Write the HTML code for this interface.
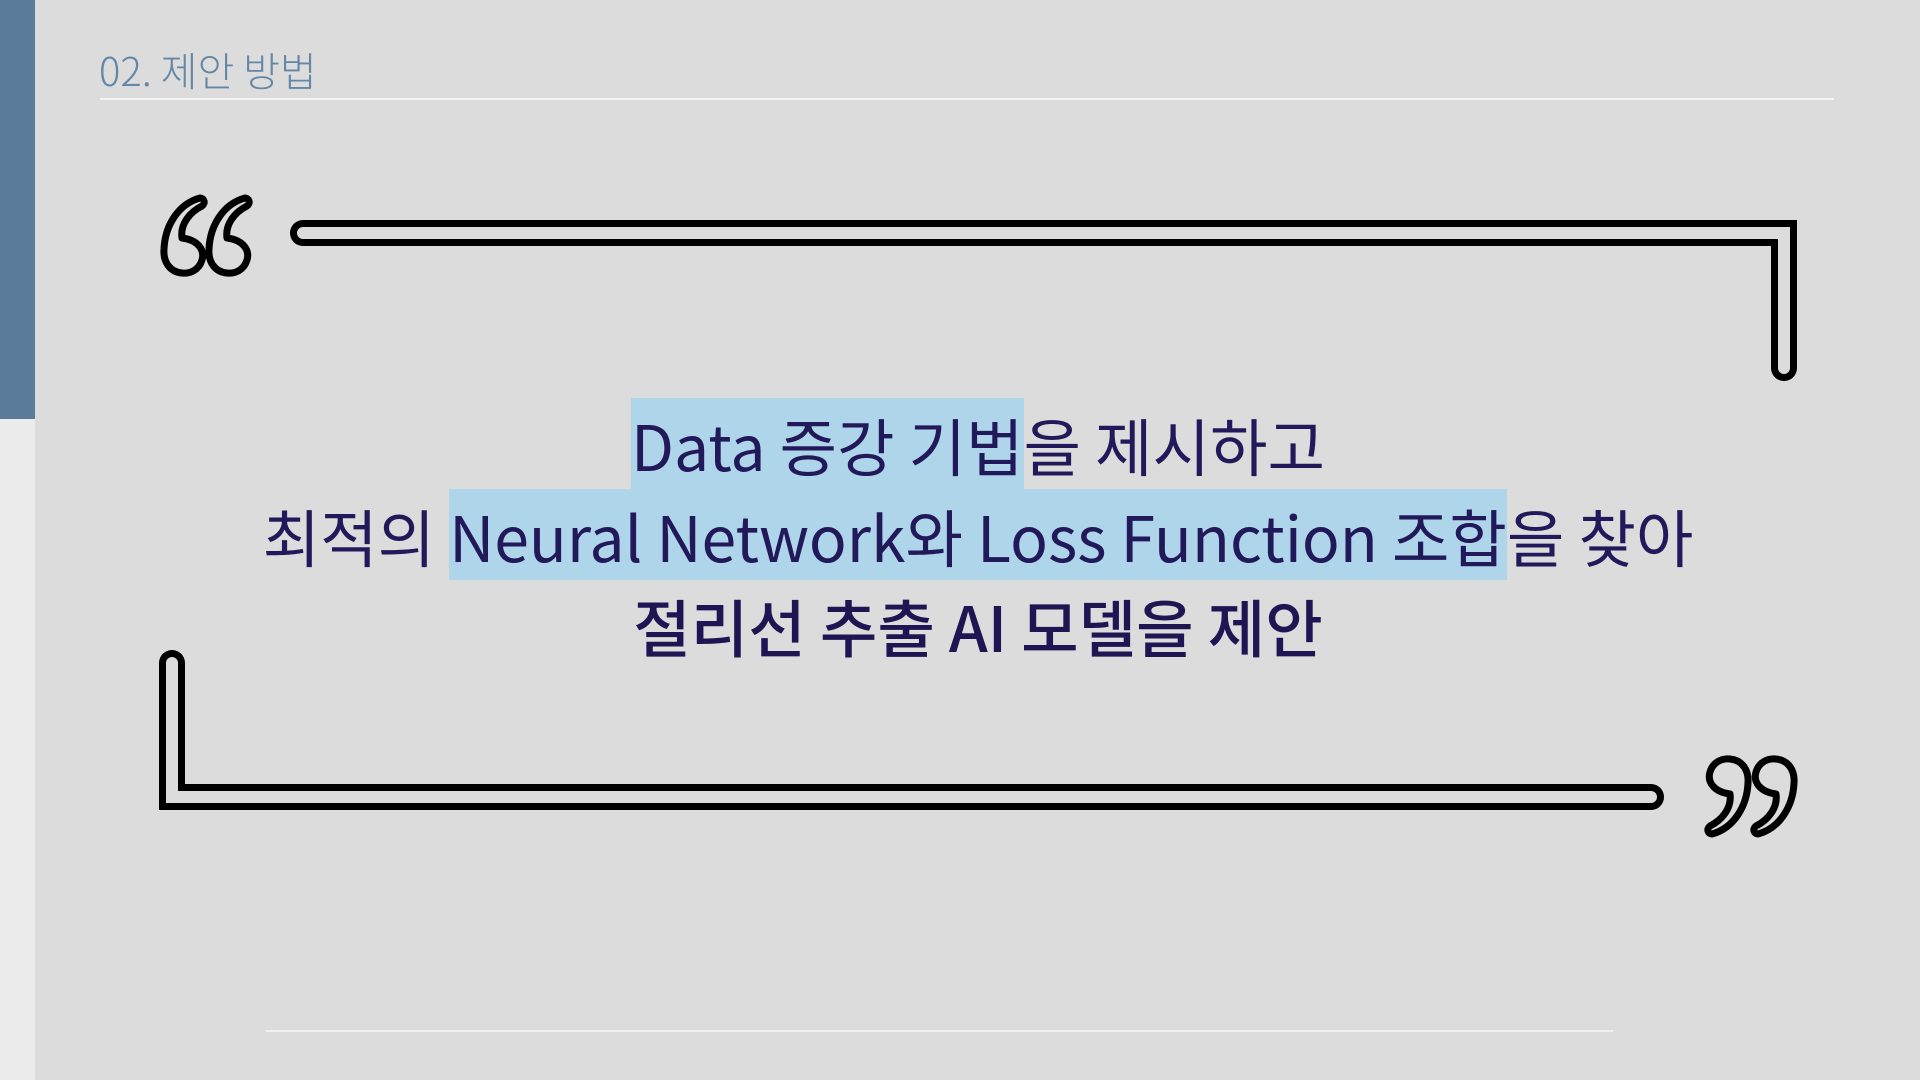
<!DOCTYPE html>
<html><head><meta charset="utf-8"><style>
html,body{margin:0;padding:0}
body{width:1920px;height:1080px;position:relative;background:#dcdcdc;overflow:hidden;font-family:"Liberation Sans","Noto Sans CJK KR",sans-serif}
.bar{position:absolute;left:0;top:0;width:35px;height:419px;background:#5a7b99}
.bar2{position:absolute;left:0;top:419px;width:35px;height:661px;background:#ececec}
.hdr{position:absolute;left:99px;top:44px;font-size:40px;color:#6487a6;font-family:"Noto Sans CJK KR",sans-serif;font-weight:300;line-height:50px}
.hl{position:absolute;left:100px;top:98px;width:1734px;height:2px;background:#f4f4f4}
.bl{position:absolute;left:266px;top:1030px;width:1347px;height:2px;background:#f0f0f0}
.line{position:absolute;left:0;width:1956px;text-align:center;font-family:"Noto Sans CJK KR",sans-serif;font-size:62.5px;color:#22195a;line-height:90px;white-space:nowrap}
.line span.h{background:#aed5ea}
</style></head><body>
<div class="bar"></div><div class="bar2"></div>
<div class="hdr">02. 제안 방법</div>
<div class="hl"></div>
<svg width="1920" height="1080" style="position:absolute;left:0;top:0">
<g fill="none" stroke-linecap="round" stroke-linejoin="miter">
<path d="M303 233 H1784 V368" stroke="#000" stroke-width="26"/>
<path d="M303 233 H1784 V368" stroke="#dcdcdc" stroke-width="12"/>
<path d="M172 663 V797 H1651" stroke="#000" stroke-width="26"/>
<path d="M172 663 V797 H1651" stroke="#dcdcdc" stroke-width="12"/>
</g>
<g fill="#dcdcdc" stroke="#000" stroke-width="7" stroke-linejoin="round">
<path d="M40 4 C44 4 46 9 42 12 C30 18 20 30 22 44 C38 46 45 56 42 66 C39 76 30 80 22 79 C10 78 3 68 4 55 C5 32 18 10 40 4 Z" transform="translate(160,194)"/>
<path d="M40 4 C44 4 46 9 42 12 C30 18 20 30 22 44 C38 46 45 56 42 66 C39 76 30 80 22 79 C10 78 3 68 4 55 C5 32 18 10 40 4 Z" transform="translate(205,194)"/>
<path d="M40 4 C44 4 46 9 42 12 C30 18 20 30 22 44 C38 46 45 56 42 66 C39 76 30 80 22 79 C10 78 3 68 4 55 C5 32 18 10 40 4 Z" transform="translate(1752,838) rotate(180)"/>
<path d="M40 4 C44 4 46 9 42 12 C30 18 20 30 22 44 C38 46 45 56 42 66 C39 76 30 80 22 79 C10 78 3 68 4 55 C5 32 18 10 40 4 Z" transform="translate(1798,838) rotate(180)"/>
</g>
</svg>
<div class="line" style="top:399px"><span class="h">Data 증강 기법</span>을 제시하고</div>
<div class="line" style="top:490px">최적의 <span class="h">Neural Network와 Loss Function 조합</span>을 찾아</div>
<div class="line" style="top:580px;font-weight:500;color:#1f1552">절리선 추출 AI 모델을 제안</div>
<div class="bl"></div>
</body></html>
